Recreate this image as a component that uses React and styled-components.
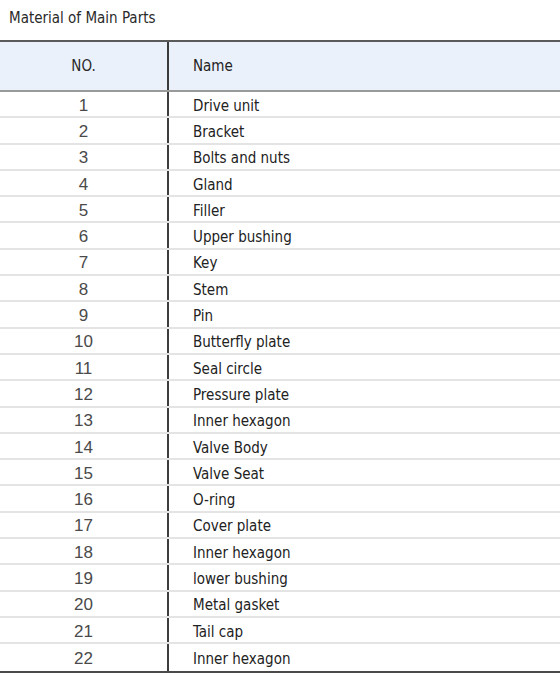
import styled, { createGlobalStyle } from "styled-components";

const GlobalStyle = createGlobalStyle`
  html, body {
    margin: 0;
    padding: 0;
    background: #ffffff;
  }
  body {
    font-family: "DejaVu Sans Condensed", "DejaVu Sans", sans-serif;
  }
`;

const Page = styled.div`
  width: 560px;
  height: 675px;
  overflow: hidden;
  background: #ffffff;
`;

const Title = styled.h1`
  margin: 0;
  height: 40px;
  padding: 9px 0 0 9px;
  box-sizing: border-box;
  font-family: "DejaVu Sans Condensed", "DejaVu Sans", sans-serif;
  font-size: 15px;
  font-weight: normal;
  line-height: 18px;
  color: #2a2a2a;
`;

const Table = styled.div`
  border-top: 2px solid #5a5a5a;
  border-bottom: 2px solid #4a4a4a;
`;

const Row = styled.div`
  display: grid;
  grid-template-columns: 169px 1fr;
  height: ${({ $head }) => ($head ? "50px" : "26.3px")};
  background: ${({ $head }) => ($head ? "#eaf1fa" : "#ffffff")};
  border-bottom: ${({ $head, $last }) =>
    $head ? "2px solid #9a9a9a" : $last ? "none" : "2px solid #e4e4e4"};
  box-sizing: border-box;
`;

const NoCell = styled.div`
  display: flex;
  align-items: center;
  justify-content: center;
  padding-top: ${({ $head }) => ($head ? "0" : "3px")};
  border-right: 2px solid #3c3c3c;
  font-family: ${({ $head }) =>
    $head
      ? `"DejaVu Sans Condensed", "DejaVu Sans", sans-serif`
      : `"Liberation Sans", Arial, sans-serif`};
  font-size: ${({ $head }) => ($head ? "15px" : "17px")};
  color: ${({ $head }) => ($head ? "#2a2a2a" : "#4a4a4a")};
`;

const NameCell = styled.div`
  display: flex;
  align-items: center;
  padding-left: 24px;
  padding-top: ${({ $head }) => ($head ? "0" : "3px")};
  font-size: 15px;
  color: #222222;
`;

const parts = [
  "Drive unit",
  "Bracket",
  "Bolts and nuts",
  "Gland",
  "Filler",
  "Upper bushing",
  "Key",
  "Stem",
  "Pin",
  "Butterfly plate",
  "Seal circle",
  "Pressure plate",
  "Inner hexagon",
  "Valve Body",
  "Valve Seat",
  "O-ring",
  "Cover plate",
  "Inner hexagon",
  "lower bushing",
  "Metal gasket",
  "Tail cap",
  "Inner hexagon",
];

export default function App() {
  return (
    <Page>
      <GlobalStyle />
      <Title>Material of Main Parts</Title>
      <Table>
        <Row $head>
          <NoCell $head>NO.</NoCell>
          <NameCell $head>Name</NameCell>
        </Row>
        {parts.map((name, i) => (
          <Row key={i} $last={i === parts.length - 1}>
            <NoCell>{i + 1}</NoCell>
            <NameCell>{name}</NameCell>
          </Row>
        ))}
      </Table>
    </Page>
  );
}
